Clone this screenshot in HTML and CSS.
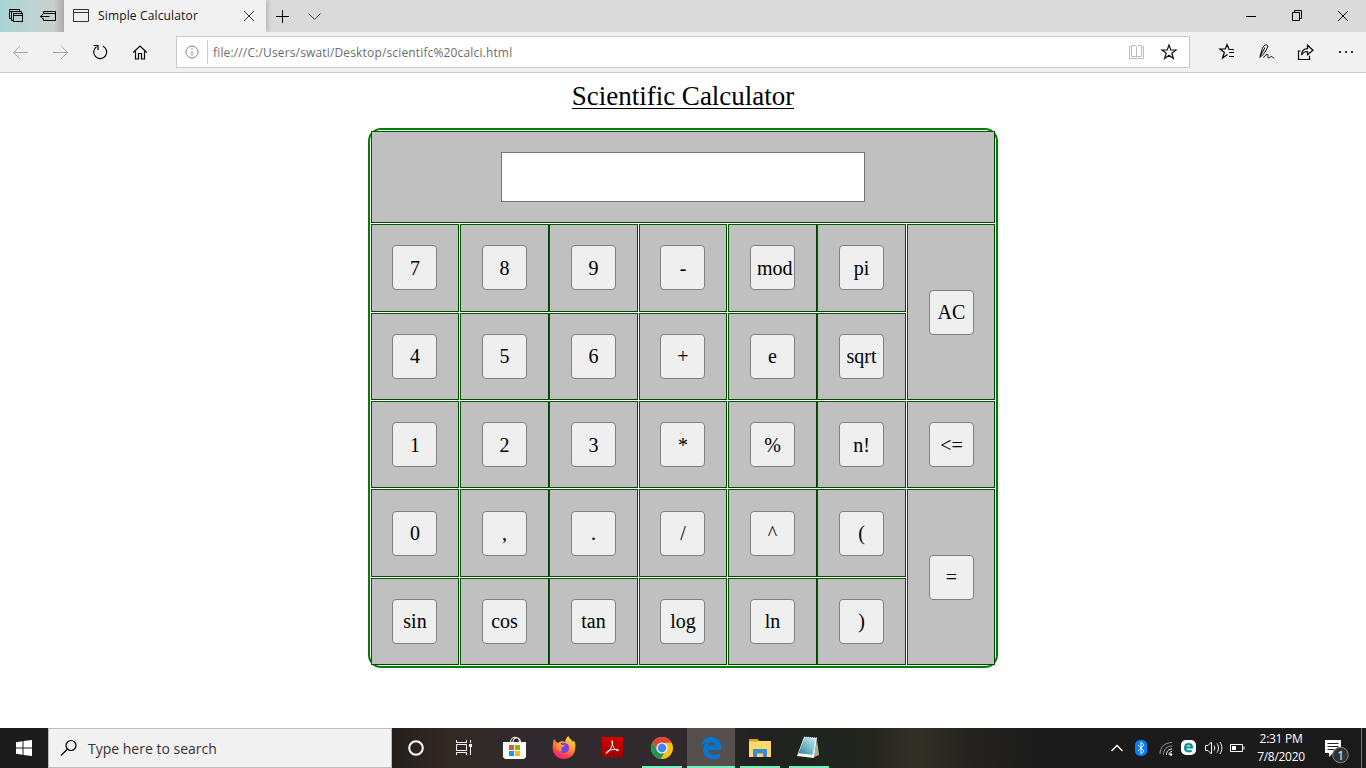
FILE: index.html
```html
<!DOCTYPE html>
<html lang="en">
<head>
<meta charset="utf-8">
<title>Simple Calculator</title>
<link rel="stylesheet" href="styles.css">
</head>
<body>
<div class="screen">
  <header class="tabstrip">
    <div class="tab-tools">
      <svg width="64" height="32" viewBox="0 0 64 32" class="line dark"><path d="M11.500 18.500h-2v-9h10v2M9 11.500h11M13.500 20.500h-2v-9h10v2"/><rect x="13.500" y="13.500" width="9" height="8" fill="#b9d2d1"/><path d="M13 15.500h10"/><path d="M43.500 13.500v-2h12v9h-12v-2M43.500 13.500h12M40.500 16.500h9M43 14l-2.500 2.500L43 19"/></svg>
    </div>
    <div class="tab">
      <svg width="16" height="14" viewBox="0 0 16 14" class="line"><path d="M.5.5h15v12H.5zM.5 3.500h15"/></svg>
      <span class="tab-title">Simple Calculator</span>
      <svg width="10" height="10" viewBox="0 0 10 10" class="line"><path d="M0 0l10 10M10 0L0 10"/></svg>
    </div>
    <svg width="60" height="32" viewBox="0 0 60 32" class="line dark"><path d="M10 16.500h13M16.500 10v13"/><path d="M42.500 13.500l6 6 6-6" stroke="#444"/></svg>
    <svg width="130" height="32" viewBox="0 0 130 32" class="line dark window-buttons"><path d="M10 16.500h10M56.500 12.500h7v8h-7zM58.500 12v-1.500h7v8h-2M102 11l10 10M112 11l-10 10"/></svg>
  </header>
  <nav class="toolbar">
    <svg width="176" height="40" viewBox="0 0 176 40" class="line dark nav-icons"><g stroke="#a5a5a5"><path d="M28 20.500H13.500M20 14l-6.500 6.500L20 27M53 20.500h14.500M61 14l6.500 6.500L61 27"/></g><path stroke-width="1.200" d="M103 14.200a6.500 6.500 0 1 1-6.500.5M93.500 13.500h4.500v4.500"/><path stroke-width="1.200" d="M133.200 20.500l6.800-6.500 6.800 6.500M135.500 19.500v7.500h3v-5.500h3v5.500h3v-7.500"/></svg>
    <div class="address">
      <svg width="14" height="14" viewBox="0 0 14 14" class="line muted"><circle cx="7" cy="7" r="6"/><path d="M7 6v4.500M7 3.500v1.300"/></svg>
      <span class="divider"></span>
      <span class="url">file:///C:/Users/swati/Desktop/scientifc%20calci.html</span>
      <svg width="64" height="28" viewBox="0 0 64 28" class="line"><path stroke="#bdbdbd" d="M6.500 8.500h-2v12h6l1 1 1-1h6v-12h-2M6.500 7.500h4l1 1 1-1h4v11h-4l-1 1-1-1h-4zM11.500 8.500v11"/><path stroke="#111" stroke-width="1.200" d="M44 7l1.800 5h5.200l-4.200 3.200 1.600 5.300-4.400-3.200-4.400 3.200 1.600-5.300-4.200-3.200h5.200z"/></svg>
    </div>
    <svg width="176" height="40" viewBox="0 0 176 40" class="line dark"><path stroke-width="1.200" d="M39 17L37 12.500 35.300 17H30l4.400 3.500L32.500 26l5-3.500M38.500 17.500H44M39 20.500h5M39 24.500h5"/><path d="M70 24.500l2-7c1-3.500 4-5.800 5.300-4.200 1 1.200-.4 3.600-1.600 5.500-1.600 2.500-3.500 5.300-6.200 7M70 24.500l5-9M73.500 25.500c2-2.800 4-3.800 4.500-2.700s-1 2.700.5 3c1.500.2 2.200-1.600 3.200-1.300s.6 1.300 2.300 1.300"/><path stroke-width="1.200" d="M110.500 19h-2v8.500h11v-3.800M111.500 23c.4-4.300 3-6.300 6-6.300v-3.500l5.500 5-5.500 4.600v-3.300c-2.400 0-4.300.8-6 3.500z"/><g fill="#333" stroke="none"><path d="M149 19h2v2h-2zM155 19h2v2h-2zM161 19h2v2h-2z"/></g></svg>
  </nav>
  <main class="page">
    <h1 class="heading">Scientific Calculator</h1>
    <div class="calc">
      <div class="cell display-cell"><input class="display" type="text"></div>
      <div class="cell a low"><button>7</button></div><div class="cell b low"><button>8</button></div><div class="cell c low"><button>9</button></div><div class="cell a low"><button>-</button></div><div class="cell b low"><button>mod</button></div><div class="cell c low"><button>pi</button></div><div class="cell last tall"><button>AC</button></div>
      <div class="cell a"><button>4</button></div><div class="cell b"><button>5</button></div><div class="cell c"><button>6</button></div><div class="cell a"><button>+</button></div><div class="cell b"><button>e</button></div><div class="cell c"><button>sqrt</button></div>
      <div class="cell a low"><button>1</button></div><div class="cell b low"><button>2</button></div><div class="cell c low"><button>3</button></div><div class="cell a low"><button>*</button></div><div class="cell b low"><button>%</button></div><div class="cell c low"><button>n!</button></div><div class="cell last low"><button>&lt;=</button></div>
      <div class="cell a r4"><button>0</button></div><div class="cell b r4"><button>,</button></div><div class="cell c r4"><button>.</button></div><div class="cell a r4"><button>/</button></div><div class="cell b r4"><button>^</button></div><div class="cell c r4"><button>(</button></div><div class="cell last tall bottom"><button>=</button></div>
      <div class="cell a bottom"><button>sin</button></div><div class="cell b bottom"><button>cos</button></div><div class="cell c bottom"><button>tan</button></div><div class="cell a bottom"><button>log</button></div><div class="cell b bottom"><button>ln</button></div><div class="cell c bottom"><button>)</button></div>
    </div>
  </main>
  <footer class="taskbar">
    <div class="start"><svg width="16" height="16" viewBox="0 0 16 16"><path fill="#fff" d="M0 2.200L6.500 1.300v6.200H0zM7.500 1.100L16 0v7.500H7.500zM0 8.500h6.500v6.200L0 13.800zM7.500 8.500H16V16l-8.500-1.100z"/></svg></div>
    <div class="search"><svg width="18" height="18" viewBox="0 0 18 18" class="line dark"><circle cx="11" cy="6.500" r="5" stroke-width="1.200"/><path stroke-width="1.200" d="M7.300 10.300L1 16.500"/></svg><span>Type here to search</span></div>
    <div class="app"><svg width="48" height="40" viewBox="0 0 48 40"><circle cx="24" cy="20" r="6.800" fill="none" stroke="#fff" stroke-width="2"/></svg></div>
    <div class="app"><svg width="48" height="40" viewBox="0 0 48 40" class="line"><path stroke="#fff" d="M16.500 12v2.500h10V12M16.500 27v-2.500h10V27M16.500 16.500h10v6h-10zM30.500 12v3M30.500 19v8"/><path fill="#fff" stroke="none" d="M29 16h3v3h-3z"/></svg></div>
    <div class="app store"><svg width="48" height="40" viewBox="0 0 48 40"><path fill="none" stroke="#ddd" stroke-width="1.200" d="M20.500 14.500c0-7 9-7 9 0M23 14c.3-5.500 7-5.500 7.500 0"/><path fill="#fff" d="M13 14h23v15l-2 2H15l-2-2z"/><path fill="#f25022" d="M19 17h5v5h-5z"/><path fill="#7fba00" d="M25 17h5v5h-5z"/><path fill="#00a4ef" d="M19 23h5v5h-5z"/><path fill="#ffb900" d="M25 23h5v5h-5z"/></svg></div>
    <div class="app"><svg width="48" height="40" viewBox="0 0 48 40"><defs><linearGradient id="fox" x1=".8" y1="0" x2=".3" y2="1"><stop offset="0" stop-color="#ffe24a"/><stop offset=".45" stop-color="#ff9429"/><stop offset=".8" stop-color="#ff3b56"/><stop offset="1" stop-color="#e6208a"/></linearGradient></defs><path fill="url(#fox)" d="M14 11l3 4 5-2 3 1c.5-2.500 1.500-4.500 3.500-6 .5 2.500 3 3.500 4.500 6l1-1.500c2 3 1.500 6 1 9.500-.7 5.500-5.500 9-11 9-6.500 0-11.300-5-11.300-11 0-3.500.5-6.500 1.300-9z"/><path fill="#7542e5" d="M20 16c2-2 7-1.500 8.500 1.500 1.500 3.500-.5 7.500-4.500 7.500-3.500 0-5.500-2.500-5-5z"/><path fill="#ff9630" d="M16 16c3-1.500 5-.5 6 1h3c-.5 1.500-2 2-3.500 2.500-.5 1.500 0 2.500 1 3.500-4 1-7-2-6.500-7z"/></svg></div>
    <div class="app acrobat"><svg width="48" height="40" viewBox="0 0 48 40"><defs><linearGradient id="pdf" x2="0" y2="1"><stop stop-color="#d40000"/><stop offset="1" stop-color="#a00000"/></linearGradient></defs><path fill="url(#pdf)" d="M14 9h21v20H14z"/><path fill="none" stroke="#fff" d="M24 14.500c-.9-1.800.8-2.600.7-.6-.3 4.500-2.700 8.500-5.200 11-1.300 1.300-2.200-.2-.5-1.300 2.700-1.800 6.500-2.500 10.500-2.200 2 .2 1.300 1.800-.3 1.200-3-1-4.500-4-5.200-8.100z"/></svg></div>
    <div class="app open"><svg width="48" height="40" viewBox="0 0 48 40"><circle cx="24" cy="20" r="11" fill="#fbc116"/><path fill="#dc4437" d="M14.500 14.500a11 11 0 0 1 19 0L24 15l-4.500 7.500z"/><path fill="#229552" d="M14.500 14.500a11 11 0 0 0 8 16.400L28.500 22H19z"/><circle cx="24" cy="20" r="5.600" fill="#fff"/><circle cx="24" cy="20" r="4.400" fill="#4285f4"/></svg></div>
    <div class="app active"><svg width="48" height="40" viewBox="0 0 48 40"><path fill="#0078d7" d="M14 18c1-6 5-9 10-9 6.500 0 10 4.500 10 10v3H21c.3 3.300 3 5 6 5 2.500 0 4.300-.7 6-1.700v4.200c-2 1-4.300 1.500-7 1.500-6 0-10-3.500-10-9 0-3.500 2-6.500 5-8-3 .5-5 2-7 4zm7.200-.2H28c0-2.500-1.200-3.800-3.300-3.800-2 0-3.200 1.500-3.500 3.800z"/></svg></div>
    <div class="app open explorer"><svg width="48" height="40" viewBox="0 0 48 40"><path fill="#ffd76a" d="M13 13h22v16H13z"/><path fill="#e2a11d" d="M13 11h8.500l1.500 1.500-1 1H13z"/><path fill="#3b8bd0" d="M17 29v-8h14v8h-4v-3.500h-6V29z"/></svg></div>
    <div class="app open notepad"><svg width="48" height="40" viewBox="0 0 48 40"><defs><linearGradient id="pad" x1="1" x2="0" y2="1"><stop stop-color="#c9edf2"/><stop offset=".5" stop-color="#74bccb"/><stop offset="1" stop-color="#287f93"/></linearGradient></defs><path fill="#b8aa8a" d="M33 12l2 15-5 2z"/><path fill="#f5f8f8" d="M20 9l13 1-3 20-17-2z"/><path fill="url(#pad)" d="M20.500 10l11.500.8-3.500 16-14-1.500z"/><path stroke="#ddd" stroke-dasharray="1 1" d="M20 9l14 1"/></svg></div>
    <div class="tray">
      <svg width="160" height="40" viewBox="0 0 160 40" class="line tray-icons"><path stroke="#fff" stroke-width="1.300" d="M11.500 23l5.500-5.500 5.500 5.500"/><rect x="35" y="12" width="12" height="16" rx="5" fill="#0082fc" stroke="none"/><path stroke="#fff" d="M38 17l6 6-3 3V14l3 3-6 6"/><g stroke="#999"><path d="M60 26c0-7 5-11.500 12-11.500M63.500 26.500c0-5 3.500-8.500 8.500-8.500"/><path stroke="#fff" d="M66.500 27c0-3.500 2-6 5.500-6M69 27c0-2 1-3.500 3-3.500"/></g><circle cx="71" cy="26.500" r="1.300" fill="#fff" stroke="none"/><rect x="81" y="12" width="15" height="15" rx="5" fill="#fff" stroke="none"/><path stroke="#0a9396" stroke-width="2.200" d="M85.500 19.500h6.400c0-4.500-6.500-4.500-6.800 0-.2 4 4 4.500 6.500 3"/><path stroke="#fff" d="M105.500 17.500h2.500l3.500-3.500v12l-3.500-3.500h-2.500zM114 17.500c1 1.500 1 3.500 0 5M117 15.500c2 3 2 6 0 9M120 14c2.500 4 2.500 8 0 12M130.500 16.500h12v7h-12zM144 18.500v3"/><path fill="#fff" stroke="none" d="M132 18h4v4h-4z"/></svg>
      <div class="clock"><span class="time">2:31 PM</span><span class="date">7/8/2020</span></div>
      <svg width="50" height="40" viewBox="0 0 50 40" class="notice"><path fill="#fff" d="M9 12h16v13h-8l-4 4v-4H9z"/><path stroke="#222" d="M11.500 15.500h11M11.500 18.500h11M11.500 21.500h7"/><circle cx="24.500" cy="27" r="7.800" fill="#333" stroke="#858585"/><text x="21.200" y="31.500" class="badge-text">1</text><path stroke="#777" d="M45.500 0v40"/></svg>
    </div>
  </footer>
</div>
</body>
</html>
```
FILE: styles.css
```css
* { box-sizing: border-box; }
body { margin: 0; overflow: hidden; background: #fff; font-family: "Open Sans", "Noto Sans", sans-serif; }
svg { display: block; flex: none; }
.line { fill: none; stroke: #333; stroke-width: 1; }
.dark { stroke: #000; }
.muted { stroke: #858585; }
.screen { width: 1366px; height: 768px; display: flex; flex-direction: column; }
.tabstrip { height: 32px; display: flex; background: #dadada; }
.tab-tools { width: 64px; background: linear-gradient(90deg, #a9d3d4, #bcd4d2 50%, #c8cecb 85%, #aaa); }
.tab { width: 202px; display: flex; align-items: center; padding: 0 12px 0 9px; background: #f1f1f1; box-shadow: 1px 0 5px #aaa; }
.tab-title { flex: 1; margin: -1px 0 0 9px; font-size: 12px; letter-spacing: .15px; white-space: nowrap; color: #111; }
.window-buttons { margin-left: auto; }
.toolbar { height: 41px; display: flex; background: #f1f1f1; border-bottom: 1px solid #ccc; }
.address { width: 1014px; height: 32px; margin-top: 4px; border: 1px solid #c9c9c9; background: #fff; display: flex; align-items: center; padding: 0 0 0 8px; }
.divider { width: 1px; height: 24px; margin: 0 5px 0 8px; background: #ccc; }
.url { flex: 1; font-size: 12px; letter-spacing: .155px; color: #6c6c6c; }
.page { height: 655px; display: flex; flex-direction: column; align-items: center; }
.heading { margin: 8px 0 19px; height: 28px; font: 27px/30px "Liberation Serif", serif; border-bottom: 1px solid #000; color: #000; white-space: nowrap; }
.calc { width: 630px; height: 540px; border: 2px solid #008000; border-radius: 13px; padding: 1px; display: grid; grid-template-columns: 89px 89px 90px 89px 89px 90px 88px; grid-template-rows: 93px 89px 88px 88px 89px 87px; }
.cell { background: #c0c0c0; border: 1px solid; border-color: #005800 #004600 #004600 #005800; margin: 0 1px 1px 0; padding: 20px 0 0 21px; }
.cell.a { padding-left: 20px; }
.cell.b, .cell.last { margin-right: 0; }
.cell.r4 { padding-top: 21px; }
.cell.bottom { margin-bottom: 0; }
.cell.tall { grid-row: span 2; padding-top: 65px; }
.cell.display-cell { grid-column: 1 / -1; margin-right: 0; padding: 20px 0 0 129px; }
.display { display: block; width: 364px; height: 50px; border: 1px solid #767676; border-radius: 0; background: #fff; }
.cell button { display: block; width: 45px; height: 45px; padding: 1px 6px; border: 1px solid #808080; border-radius: 4px; background: #efefef; color: #000; font: 20px "Liberation Serif", serif; overflow: hidden; }
.cell.a button { padding-left: 7px; }
.cell.low button { padding-top: 3px; }
.taskbar { height: 40px; display: flex; background: linear-gradient(90deg, #1c1b1b 0, #211d1b 28%, #332923 33%, #302a2f 40%, #30292d 50%, #20231f 56%, #20241e 60%, #24261f 64%, #322f26 67%, #24231f 71%, #1b1b1b 76%); }
.start { width: 48px; display: grid; place-items: center; }
.search { width: 344px; display: flex; align-items: center; padding-left: 11px; background: #f1f1f1; border: 1px solid #bcbcbc; color: #333; font-size: 14px; }
.search span { margin-left: 10px; }
.app { width: 48px; height: 40px; }
.app.store { width: 50px; margin-left: 2px; }
.app.acrobat { width: 50px; }
.open { background: linear-gradient(#72f0b8, #72f0b8) 4px 100% / 40px 2px no-repeat; }
.open.notepad { background-position-x: 5px; }
.app.active { margin: 0 1px; background: #55504e; border-bottom: 2px solid #72f0b8; }
.open + .active { margin-right: 1px; }
.tray { margin-left: auto; display: flex; color: #fff; }
.tray-icons { margin-right: -14px; }
.clock { width: 70px; display: flex; flex-direction: column; align-items: center; padding-top: 2px; font-size: 12px; line-height: 18px; letter-spacing: -.3px; }
.badge-text { fill: #fff; font: 12px "Open Sans", sans-serif; }
```
